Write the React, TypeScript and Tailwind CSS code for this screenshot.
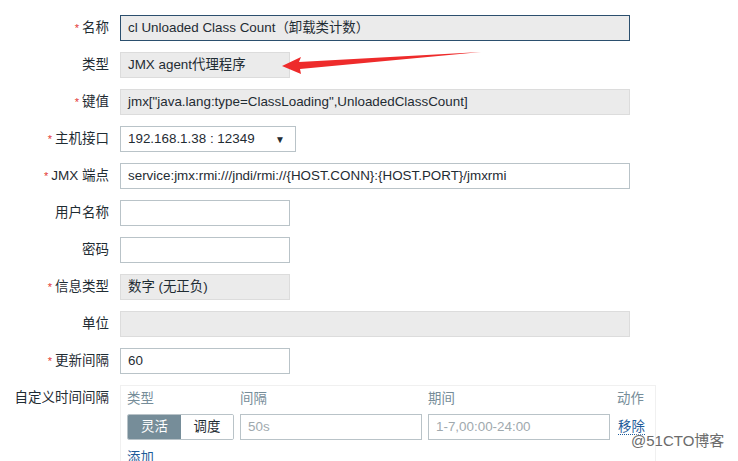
import React from 'react';

const font = { fontFamily: '"Liberation Sans", Arial, "Noto Sans CJK SC", sans-serif' };

function Label({ text, req }: { text: string; req?: boolean }) {
  return (
    <div className="w-[120px] shrink-0 pr-[11px] text-right text-[13.5px] text-[#1f2c33] leading-[26px]">
      {req && <span className="text-[#e33734] text-[11px] mr-[3px]">*</span>}
      {text}
    </div>
  );
}

function Field({ value, wide, readOnly, focus }: { value?: string; wide?: boolean; readOnly?: boolean; focus?: boolean }) {
  const base = 'h-[26px] px-[7px] text-[13.4px] leading-[24px] text-[#1f2c33] border truncate';
  const w = wide ? 'w-[510px]' : 'w-[170px]';
  let tone = 'bg-white border-[#b9c3c8]';
  if (readOnly) tone = 'bg-[#ebebeb] border-[#dcdcdc]';
  if (focus) tone = 'bg-[#ebebeb] border-[#2b4f6e]';
  return <div className={`${base} ${w} ${tone}`}>{value}</div>;
}

export default function App() {
  return (
    <div className="relative w-[738px] h-[461px] bg-white overflow-hidden" style={font}>
      <div className="flex flex-col gap-[11px] pt-[15px]">
        <div className="flex">
          <Label text="名称" req />
          <Field wide focus value="cl Unloaded Class Count（卸载类计数）" />
        </div>
        <div className="flex">
          <Label text="类型" />
          <Field readOnly value="JMX agent代理程序" />
        </div>
        <div className="flex">
          <Label text="键值" req />
          <Field wide readOnly value='jmx["java.lang:type=ClassLoading",UnloadedClassCount]' />
        </div>
        <div className="flex">
          <Label text="主机接口" req />
          <div className="h-[26px] w-[176px] flex items-center justify-between pl-[7px] pr-[10px] border border-[#b9c3c8] bg-white text-[13.4px] text-[#1f2c33]">
            <span>192.168.1.38 : 12349</span>
            <span className="text-[10px]">▼</span>
          </div>
        </div>
        <div className="flex">
          <Label text="JMX 端点" req />
          <Field wide value="service:jmx:rmi:///jndi/rmi://{HOST.CONN}:{HOST.PORT}/jmxrmi" />
        </div>
        <div className="flex">
          <Label text="用户名称" />
          <Field />
        </div>
        <div className="flex">
          <Label text="密码" />
          <Field />
        </div>
        <div className="flex">
          <Label text="信息类型" req />
          <Field readOnly value="数字 (无正负)" />
        </div>
        <div className="flex">
          <Label text="单位" />
          <Field wide readOnly />
        </div>
        <div className="flex">
          <Label text="更新间隔" req />
          <Field value="60" />
        </div>
        <div className="flex">
          <div className="w-[120px] shrink-0 pr-[11px] pt-[5px] text-right text-[13.5px] text-[#1f2c33] leading-[16px]">自定义时间间隔</div>
          <div className="w-[536px] border border-[#f0f0f0] px-[6px] pt-[5px] pb-[6px] text-[13.4px]">
            <div className="flex text-[#768d99] leading-[16px]">
              <span className="w-[113px]">类型</span>
              <span className="w-[188px]">间隔</span>
              <span className="w-[189px]">期间</span>
              <span>动作</span>
            </div>
            <div className="flex items-center mt-[7px]">
              <div className="flex h-[26px] w-[107px] border border-[#b9c3c8] rounded-[2px] overflow-hidden">
                <div className="w-[53px] bg-[#768d99] text-white flex items-center justify-center">灵活</div>
                <div className="flex-1 bg-white text-[#1f2c33] flex items-center justify-center">调度</div>
              </div>
              <div className="ml-[6px] h-[26px] w-[182px] border border-[#b9c3c8] px-[7px] leading-[24px] text-[#a0a9ae]">50s</div>
              <div className="ml-[6px] h-[26px] w-[182px] border border-[#b9c3c8] px-[7px] leading-[24px] text-[#a0a9ae]">1-7,00:00-24:00</div>
              <span className="ml-[8px] text-[#1f5c99] border-b border-dotted border-[#1f5c99] leading-[15px]">移除</span>
            </div>
            <div className="mt-[10px] text-[#1f5c99] leading-[16px]">添加</div>
          </div>
        </div>
      </div>

      <svg className="absolute left-0 top-0" width="738" height="461" viewBox="0 0 738 461">
        <polygon points="282,66 301,57 299,62 481,52 300,69 301,74" fill="#ee2b2b" />
      </svg>

      <div className="absolute left-[631px] top-[432px] text-[15px] leading-[18px] text-[#6b6b6b]" style={{ textShadow: '0 0 2px #fff, 0 0 2px #fff' }}>
        @51CTO博客
      </div>
    </div>
  );
}
